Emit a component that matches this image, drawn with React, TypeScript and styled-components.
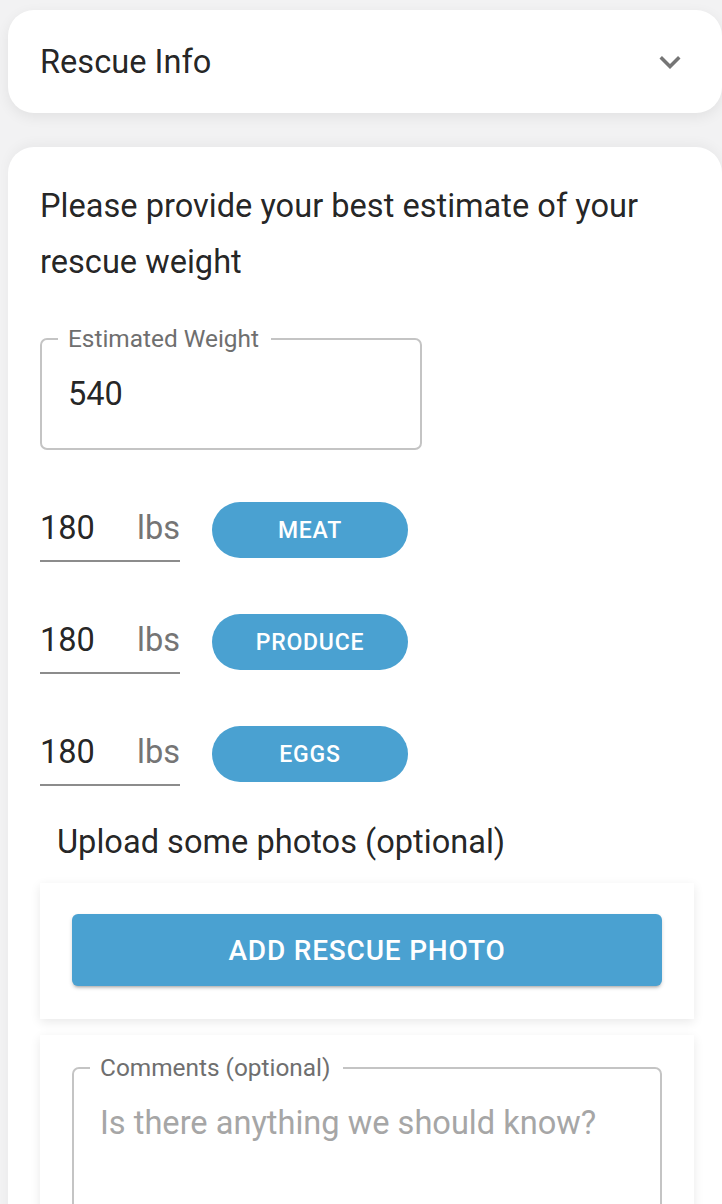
import React from "react";
import styled, { createGlobalStyle } from "styled-components";

const GlobalStyle = createGlobalStyle`
  html, body {
    margin: 0;
    padding: 0;
    background-color: #f2f2f3;
    font-family: Roboto, "Liberation Sans", Arial, sans-serif;
    color: rgba(0, 0, 0, 0.87);
  }
  * {
    box-sizing: border-box;
  }
`;

const Page = styled.div`
  padding: 10px 0 0 8px;
  overflow: hidden;
  height: 1204px;
`;

const Header = styled.div`
  width: 714px;
  height: 103px;
  background: #fff;
  border-radius: 26px;
  box-shadow: 0 4px 14px rgba(0, 0, 0, 0.07);
  display: flex;
  align-items: center;
  justify-content: space-between;
  padding: 0 31px 0 32px;
  font-size: 32.6px;
`;

const MainCard = styled.div`
  margin-top: 34px;
  width: 714px;
  background: #fff;
  border-radius: 26px 26px 0 0;
  box-shadow: 0 -4px 12px rgba(0, 0, 0, 0.04);
  padding: 31px 28px 40px 32px;
`;

const Intro = styled.p`
  margin: 0;
  font-size: 32.6px;
  line-height: 56px;
`;

const Outlined = styled.fieldset<{ $width?: string; $height: number }>`
  margin: 0;
  width: ${(p) => p.$width || "100%"};
  height: ${(p) => p.$height}px;
  border: 2px solid #c4c4c4;
  border-radius: 7px;
  padding: 0 26px;
  legend {
    font-size: 24.4px;
    color: #6f6f6f;
    padding: 0 12px 0 10px;
    margin-left: -10px;
    line-height: 1;
  }
`;

const WeightField = styled(Outlined)`
  margin-top: 37px;
  display: flex;
  align-items: center;
`;

const Value = styled.span<{ $muted?: boolean }>`
  font-size: 32.6px;
  color: ${(p) => (p.$muted ? "#a6a6a6" : "rgba(0, 0, 0, 0.87)")};
`;

const WeightValue = styled(Value)`
  margin-top: -12px;
`;

const Rows = styled.div`
  margin-top: 48px;
  display: flex;
  flex-direction: column;
  gap: 48px;
`;

const Row = styled.div`
  display: flex;
  align-items: center;
  gap: 32px;
`;

const LineInput = styled.div`
  width: 140px;
  height: 64px;
  border-bottom: 2px solid #8c8c8c;
  display: flex;
  align-items: center;
  justify-content: space-between;
  font-size: 32.6px;
  padding-bottom: 2px;
`;

const Unit = styled.span`
  color: #757575;
`;

const Pill = styled.button`
  width: 196px;
  height: 56px;
  border: none;
  border-radius: 28px;
  background: #4aa1d1;
  color: #fff;
  font-family: inherit;
  font-size: 23px;
  font-weight: 500;
  letter-spacing: 0.8px;
`;

const SectionLabel = styled.div`
  margin-top: 36px;
  padding-left: 17px;
  font-size: 32.6px;
  line-height: 40px;
`;

const Panel = styled.div<{ $gap: number }>`
  margin-top: ${(p) => p.$gap}px;
  background: #fff;
  box-shadow: 0 3px 10px rgba(0, 0, 0, 0.09);
  padding: 31px 32px 33px;
`;

const WideButton = styled.button`
  width: 100%;
  height: 72px;
  border: none;
  border-radius: 6px;
  background: #4aa1d1;
  color: #fff;
  font-family: inherit;
  font-size: 28px;
  font-weight: 500;
  letter-spacing: 0.8px;
  box-shadow: 0 3px 3px -2px rgba(0, 0, 0, 0.25), 0 2px 4px rgba(0, 0, 0, 0.14);
`;

const CommentField = styled(Outlined)`
  margin-top: -10px;
  padding-top: 24px;
`;

const Chevron = () => (
  <svg width="42" height="42" viewBox="0 0 24 24" fill="#757575">
    <path d="M16.59 8.59 12 13.17 7.41 8.59 6 10l6 6 6-6z" />
  </svg>
);

const categories = ["MEAT", "PRODUCE", "EGGS"];

const App = () => {
  return (
    <>
      <GlobalStyle />
      <Page>
        <Header>
          <span>Rescue Info</span>
          <Chevron />
        </Header>
        <MainCard>
          <Intro>Please provide your best estimate of your rescue weight</Intro>
          <WeightField $width="382px" $height={123}>
            <legend>Estimated Weight</legend>
            <WeightValue>540</WeightValue>
          </WeightField>
          <Rows>
            {categories.map((c) => (
              <Row key={c}>
                <LineInput>
                  <span>180</span>
                  <Unit>lbs</Unit>
                </LineInput>
                <Pill>{c}</Pill>
              </Row>
            ))}
          </Rows>
          <SectionLabel>Upload some photos (optional)</SectionLabel>
          <Panel $gap={21}>
            <WideButton>ADD RESCUE PHOTO</WideButton>
          </Panel>
          <Panel $gap={16}>
            <CommentField $height={220}>
              <legend>Comments (optional)</legend>
              <Value $muted>Is there anything we should know?</Value>
            </CommentField>
          </Panel>
        </MainCard>
      </Page>
    </>
  );
};

export default App;
